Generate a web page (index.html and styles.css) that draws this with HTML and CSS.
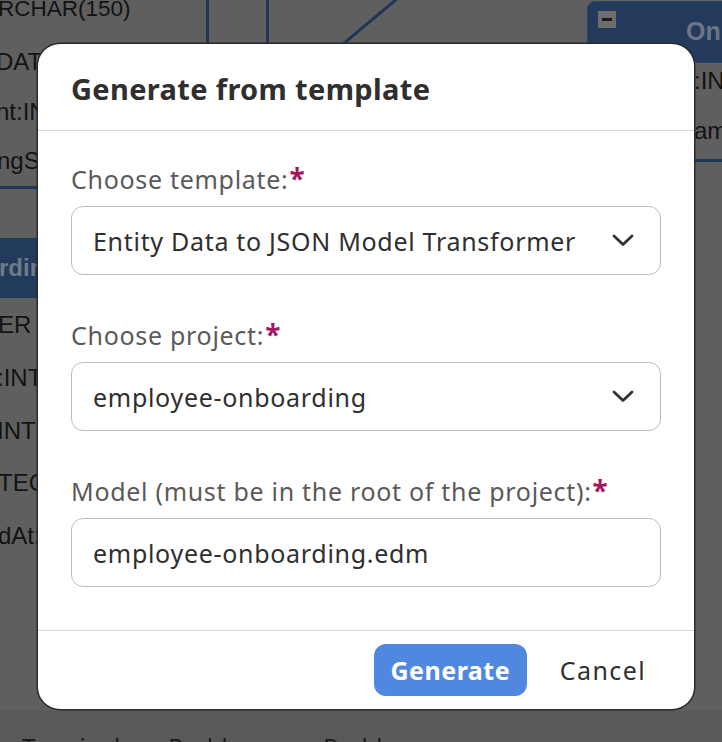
FILE: index.html
```html
<!DOCTYPE html>
<html>
<head>
<meta charset="utf-8">
<link rel="stylesheet" href="styles.css">
</head>
<body>
<div class="canvas">
  <div class="txt t1">RCHAR(150)</div>
  <div class="txt t2">DAT</div>
  <div class="txt t3">nt:IN</div>
  <div class="txt t4">ngSt</div>
  <div class="hline h1"></div>
  <div class="lbox">rding</div>
  <div class="txt t5">ER</div>
  <div class="txt t6">:INT</div>
  <div class="txt t7">INTE</div>
  <div class="txt t8">TEG</div>
  <div class="txt t9">dAt:</div>
  <div class="vline v1"></div>
  <div class="vline v2"></div>
  <div class="diag"></div>
  <div class="rbox">
    <span class="minus"></span>
    <span class="rtitle">Onb</span>
  </div>
  <div class="txt t10">:IN</div>
  <div class="txt t11">am</div>
  <div class="hline h2"></div>
  <div class="panel">
    <span>Terminal</span><span>Problems</span><span>Problems</span>
  </div>
</div>

<div class="overlay">
  <div class="dialog">
    <div class="dlg-header">Generate from template</div>
    <div class="dlg-body">
      <div class="field">
        <label class="label">Choose template:<span class="req">*</span></label>
        <div class="select">
          <span>Entity Data to JSON Model Transformer</span>
          <svg class="chev" width="22" height="13" viewBox="0 0 22 13"><path d="M2 2 L11 10.5 L20 2" fill="none" stroke="#333" stroke-width="2.8" stroke-linecap="round" stroke-linejoin="round"/></svg>
        </div>
      </div>
      <div class="field">
        <label class="label">Choose project:<span class="req">*</span></label>
        <div class="select">
          <span>employee-onboarding</span>
          <svg class="chev" width="22" height="13" viewBox="0 0 22 13"><path d="M2 2 L11 10.5 L20 2" fill="none" stroke="#333" stroke-width="2.8" stroke-linecap="round" stroke-linejoin="round"/></svg>
        </div>
      </div>
      <div class="field">
        <label class="label">Model (must be in the root of the project):<span class="req">*</span></label>
        <div class="select">
          <span>employee-onboarding.edm</span>
        </div>
      </div>
    </div>
    <div class="dlg-footer">
      <button class="btn primary">Generate</button>
      <button class="btn ghost">Cancel</button>
    </div>
  </div>
</div>
</body>
</html>
```
FILE: styles.css
```css
html, body {
  margin: 0;
  padding: 0;
}
body {
  width: 722px;
  height: 742px;
  overflow: hidden;
  background: #5f5f5f;
  font-family: "Noto Sans", sans-serif;
  position: relative;
}
.canvas {
  position: absolute;
  inset: 0;
  overflow: hidden;
}
.txt {
  position: absolute;
  font-family: "Liberation Sans", Arial, sans-serif;
  font-size: 24px;
  line-height: 1;
  color: #131313;
  white-space: nowrap;
}
.t1 { left: -2px; top: -2px; font-size: 22.5px; }
.t2 { left: -4px; top: 50px; }
.t3 { left: -4px; top: 100px; }
.t4 { left: -3px; top: 149px; }
.t5 { left: -2px; top: 313px; }
.t6 { left: -3px; top: 366px; }
.t7 { left: -3px; top: 419px; }
.t8 { left: -2px; top: 471px; }
.t9 { left: -2px; top: 524px; }
.t10 { left: 694px; top: 69px; }
.t11 { left: 694px; top: 119px; }
.hline {
  position: absolute;
  height: 3px;
  background: #1f3656;
}
.h1 { left: 0; width: 40px; top: 186px; }
.h2 { left: 690px; width: 40px; top: 159px; }
.vline {
  position: absolute;
  top: 0;
  width: 3px;
  height: 60px;
  background: #1f3656;
}
.v1 { left: 206px; }
.v2 { left: 266px; }
.diag {
  position: absolute;
  left: 330px;
  top: 20px;
  width: 80px;
  height: 3px;
  background: #1f3656;
  transform: rotate(-40deg);
  transform-origin: center;
}
.lbox {
  position: absolute;
  left: 0;
  top: 238px;
  width: 40px;
  height: 60px;
  background: #223a5b;
  color: #6f7a88;
  font-family: "Liberation Sans", Arial, sans-serif;
  font-weight: bold;
  font-size: 24px;
  line-height: 60px;
  text-indent: -1px;
  white-space: nowrap;
  overflow: hidden;
}
.rbox {
  position: absolute;
  left: 587px;
  top: 1px;
  width: 160px;
  height: 60px;
  background: #233a5c;
  border-top-left-radius: 8px;
  border: 1px solid #2a4468;
}
.minus {
  position: absolute;
  left: 10px;
  top: 9px;
  width: 18px;
  height: 17px;
  background: #6d6d6d;
}
.minus::after {
  content: "";
  position: absolute;
  left: 4px;
  top: 7px;
  width: 10px;
  height: 3px;
  background: #1a1a1a;
}
.rtitle {
  position: absolute;
  left: 98px;
  top: 15px;
  font-family: "Liberation Sans", Arial, sans-serif;
  font-weight: bold;
  font-size: 25px;
  color: #6b7585;
}
.panel {
  position: absolute;
  left: 0;
  top: 711px;
  width: 722px;
  height: 40px;
  background: #595959;
  display: flex;
  gap: 48px;
  padding-left: 22px;
  box-sizing: border-box;
  font-family: "Noto Sans", sans-serif;
  font-size: 24px;
  color: #1a1a1a;
  line-height: 1;
  padding-top: 24px;
}

.overlay {
  position: absolute;
  inset: 0;
  padding: 44px 0 0 38px;
  box-sizing: border-box;
}
.dialog {
  width: 656px;
  height: 665px;
  box-sizing: border-box;
  background: #fff;
  border-radius: 22px;
  box-shadow: 0 0 0 1.5px #2a2a2a;
  display: flex;
  flex-direction: column;
  overflow: hidden;
}
.dlg-header {
  height: 87px;
  flex: none;
  box-sizing: border-box;
  padding: 0 33px;
  display: flex;
  align-items: center;
  border-bottom: 1.5px solid #d8d8d8;
  font-weight: 700;
  font-size: 29px;
  letter-spacing: 0.35px;
  color: #2f2f2f;
  padding-top: 2px;
}
.dlg-body {
  flex: 1;
  padding: 32px 33px 0 33px;
  display: flex;
  flex-direction: column;
  gap: 44px;
}
.field {
  display: flex;
  flex-direction: column;
  gap: 11px;
}
.label {
  font-size: 25px;
  letter-spacing: 0.7px;
  line-height: 31px;
  color: #5a5a5a;
}
.req {
  color: #a3175f;
  font-weight: 700;
  font-size: 28px;
  margin-left: 1px;
}
.select {
  height: 69px;
  box-sizing: border-box;
  border: 1.5px solid #bdbdbd;
  border-radius: 12px;
  display: flex;
  align-items: center;
  justify-content: space-between;
  padding: 0 26px 0 21px;
  font-size: 25px;
  letter-spacing: 0.7px;
  color: #2f2f2f;
}
.chev {
  display: block;
}
.dlg-footer {
  height: 79px;
  flex: none;
  box-sizing: border-box;
  border-top: 1.5px solid #d8d8d8;
  display: flex;
  align-items: center;
  justify-content: flex-end;
  padding-right: 32px;
  gap: 17px;
}
.btn {
  font-family: "Noto Sans", sans-serif;
  font-size: 25px;
  letter-spacing: 0.5px;
  border: none;
  cursor: pointer;
}
.primary {
  width: 153px;
  height: 52px;
  background: #5088e0;
  color: #fff;
  font-weight: 700;
  border-radius: 12px;
}
.ghost {
  background: transparent;
  color: #2f2f2f;
  padding: 0 16px;
  letter-spacing: 1.4px;
  height: 52px;
}
```
